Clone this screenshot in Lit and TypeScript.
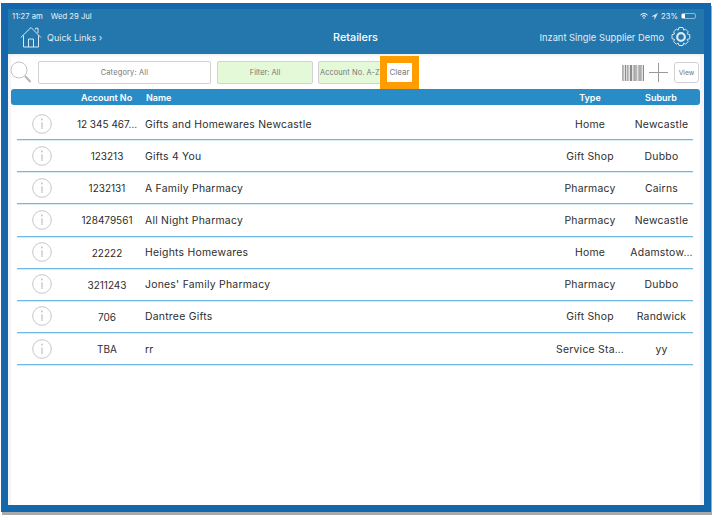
import { LitElement, html, css, svg } from "lit";
import { customElement } from "lit/decorators.js";

const rows = [
  ["12 345 467…", "Gifts and Homewares Newcastle", "Home", "Newcastle"],
  ["123213", "Gifts 4 You", "Gift Shop", "Dubbo"],
  ["1232131", "A Family Pharmacy", "Pharmacy", "Cairns"],
  ["128479561", "All Night Pharmacy", "Pharmacy", "Newcastle"],
  ["22222", "Heights Homewares", "Home", "Adamstow…"],
  ["3211243", "Jones' Family Pharmacy", "Pharmacy", "Dubbo"],
  ["706", "Dantree Gifts", "Gift Shop", "Randwick"],
  ["TBA", "rr", "Service Sta…", "yy"],
];

const bars = [1,1,2,1,1,3,1,2,1,1,2,1,3,1,1,2,1];

@customElement("app-root")
export class AppRoot extends LitElement {
  static styles = css`
    :host { display: block; box-sizing: border-box; width: 712px; height: 515px; padding: 3px 0 0 1px; background: #fff; font-family: Inter, "Open Sans", sans-serif; overflow: hidden; }
    .frame { box-sizing: border-box; width: 710px; height: 509px; background: #1467ab; padding: 6px 7px 7px 7px; position: relative; box-shadow: 1px 3px 0 #aaa; }
    .screen { width: 696px; height: 496px; background: linear-gradient(to right, #f5f4fa 3px, #fff 3px, #fff calc(100% - 4px), #f5f4fa calc(100% - 4px)); display: flex; flex-direction: column; }
    .head { height: 45px; background: #2377ad; color: #fff; box-sizing: border-box; flex: none; display: flex; flex-direction: column; }
    .status { height: 15px; box-sizing: border-box; display: flex; justify-content: space-between; align-items: center; padding: 0 8px 1px 4px; font-size: 7.7px; color: #eaf3f8; }
    .status .l { display: flex; gap: 8px; }
    .status .r { display: flex; align-items: center; gap: 3px; }
    .batt { width: 15px; height: 6px; border: 1px solid #8cb8d4; border-radius: 2px; box-sizing: border-box; display: block; }
    .batt i { display: block; width: 3px; height: 4px; background: #fff; }
    .nav { flex: 1; display: grid; grid-template-columns: 1fr auto 1fr; align-items: center; padding: 0 12px 4px 12px; }
    .nav .ql { display: flex; align-items: center; gap: 5px; font-size: 9px; color: #e0edf5; }
    .nav .title { font-size: 10.8px; font-weight: 500; margin-left: -1px; }
    .nav .sup { display: flex; justify-content: flex-end; align-items: center; gap: 6px; font-size: 9.35px; color: #e0edf5; }
    .tools { height: 35px; box-sizing: border-box; flex: none; display: flex; align-items: center; padding: 2px 5px 0 2px; box-shadow: inset 0 3px 3px -2px #e8e8e8; }
    .pill { box-sizing: border-box; height: 23px; border: 1px solid #d2d2d2; border-radius: 2px; display: flex; align-items: center; justify-content: center; font-size: 7.4px; color: #777; background: #fff; }
    .cat { width: 173px; margin-left: 7px; letter-spacing: 0.2px; }
    .filter { width: 96px; margin-left: 6px; background: #e4f9d8; }
    .acct { width: 64px; margin-left: 5px; background: #e4f9d8; justify-content: flex-start; padding-left: 1px; white-space: nowrap; overflow: hidden; letter-spacing: 0.1px; }
    .clearwrap { position: relative; width: 0; height: 23px; }
    .clear { position: absolute; left: -2px; top: -5px; width: 39px; height: 33px; box-sizing: border-box; border: 7px solid #ff9c00; padding-bottom: 1px; background: #fff; color: #777; font-size: 8px; display: flex; align-items: center; justify-content: center; }
    .spacer { flex: 1; }
    .view { width: 25px; height: 21px; border-radius: 3px; margin-left: 6px; font-size: 6.8px; }
    .plus { margin-left: 5px; }
    .cols { display: grid; align-items: center; }
    .thead { margin: 0 4px 0 3px; height: 16px; flex: none; background: #298cc6; border-radius: 3px; color: #fff; font-size: 9px; font-weight: 600; grid-template-columns: 70px 65px 1fr 64px 78px; }
    .c { text-align: center; }
    .body { padding: 3px 11px 0 9px; }
    .row { height: 32.15px; box-sizing: border-box; border-bottom: 1px solid #6fbae6; box-shadow: 0 1px 0 #d6ebf7; color: #2d2d2d; font-size: 10.4px; grid-template-columns: 50px 78px 1fr 80px 63px; white-space: nowrap; letter-spacing: 0.25px; }
    .num { text-align: center; padding-left: 2px; font-size: 10px; letter-spacing: 0; }
    .ic { display: flex; justify-content: center; }
    .txt { padding-top: 1px; }
    svg { display: block; flex: none; }
  `;

  render() {
    let x = 0;
    return html`<div class="frame">
      <div class="screen">
        <div class="head">
          <div class="status">
            <div class="l"><span>11:27 am</span><span>Wed 29 Jul</span></div>
            <div class="r">
              <svg width="8" height="6" viewBox="0 0 8 6"><path d="M.5 2a5 5 0 0 1 7 0M2 3.4a3 3 0 0 1 4 0" stroke="#fff" fill="none"/><circle cx="4" cy="5" r=".8" fill="#fff"/></svg>
              <svg width="7" height="7" viewBox="0 0 7 7"><path d="M7 0 0 3.4h3.4V7z" fill="#d5e6f1"/></svg>
              <span>23%</span><span class="batt"><i></i></span>
            </div>
          </div>
          <div class="nav">
            <div class="ql">
              <svg width="22" height="22" viewBox="0 0 22 22" fill="none" stroke="#dbe9f3" stroke-width="1"><path d="M.8 11.5 11 1.5l10 10M3.5 9.5V21h15V9.5M15.5 3.5V2.2h2.5V7M8.5 21v-8h5v8"/></svg>
              <span>Quick Links ›</span>
            </div>
            <div class="title">Retailers</div>
            <div class="sup">
              <span>Inzant Single Supplier Demo</span>
              <svg width="22" height="22" viewBox="0 0 22 22" fill="none" stroke="#dbe9f3"><path stroke-width="1" d="M9 1.5h4l.6 2.6 2-.9 2.6 2.6-1 2.1 2.6.8v4l-2.6.7 1 2.1-2.6 2.7-2-1-.6 2.3H9l-.7-2.3-2 1-2.7-2.7 1-2.1-2.6-.7v-4l2.6-.8-1-2.1 2.7-2.6 2 .9z"/><circle cx="11" cy="11" r="3.8" stroke-width="2.2"/></svg>
            </div>
          </div>
        </div>
        <div class="tools">
          <svg width="21" height="23" viewBox="0 0 21 23" fill="none"><circle cx="9" cy="9" r="8" stroke="#c4c4c4"/><path d="m15 15 5.5 6" stroke="#b5b5b5" stroke-width="2"/></svg>
          <div class="pill cat">Category: All</div>
          <div class="pill filter">Filter: All</div>
          <div class="pill acct">Account No. A-Z</div>
          <div class="clearwrap"><div class="clear">Clear</div></div>
          <div class="spacer"></div>
          <svg width="22" height="16" viewBox="0 0 22 16">${bars.map((w) => { const r = svg`<rect x=${x} y="0" width=${w * 0.7} height="16" fill="#8a8a8a"/>`; x += w * 0.7 + 0.75; return r; })}</svg>
          <svg class="plus" width="19" height="19" viewBox="0 0 19 19"><path d="M9.5 0v19M0 9.5h19" stroke="#999" stroke-width="1"/></svg>
          <div class="pill view">View</div>
        </div>
        <div class="thead cols">
          <span></span><span>Account No</span>
          <span>Name</span>
          <span class="c">Type</span><span class="c">Suburb</span>
        </div>
        <div class="body">
          ${rows.map((r) => html`<div class="row cols">
            <div class="ic"><svg width="20" height="20" viewBox="0 0 20 20" fill="none"><circle cx="10" cy="10" r="9.3" stroke="#c6c6c6"/><path d="M10 8.5V15" stroke="#c0c0c0" stroke-width="1.2"/><circle cx="10" cy="5.5" r=".9" fill="#c0c0c0"/></svg></div>
            <div class="num txt">${r[0]}</div>
            <div class="txt">${r[1]}</div>
            <div class="c txt">${r[2]}</div>
            <div class="c txt">${r[3]}</div>
          </div>`)}
        </div>
      </div>
    </div>`;
  }
}
